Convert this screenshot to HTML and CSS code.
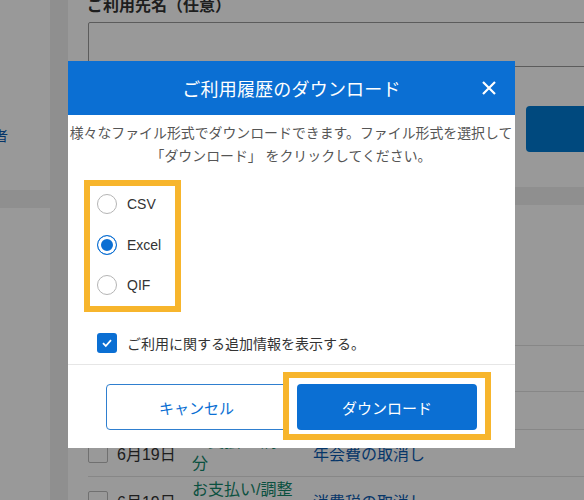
FILE: index.html
```html
<!DOCTYPE html>
<html lang="ja">
<head>
    <meta charset="UTF-8">
    <title>ご利用履歴のダウンロード</title>
    <link rel="stylesheet" href="styles.css">
</head>
<body>
    <div class="page">
        <div class="side">
            <div class="side-panel top">
                <a class="side-link" href="javascript:;">ご利用者</a>
            </div>
            <div class="side-panel"></div>
        </div>

        <div class="main">
            <div class="card form-card">
                <div class="field-label">ご利用先名（任意）</div>
                <div class="field-input"></div>
                <div class="search-btn"></div>
            </div>

            <div class="card list-card">
                <div class="row head"></div>
                <div class="row r1"></div>
                <div class="row r2"></div>
                <div class="row r3">
                    <span class="chk"></span>
                    <span class="date">6月19日</span>
                    <span class="kind">お支払い/調整<br>分</span>
                    <span class="desc">年会費の取消し</span>
                </div>
                <div class="row r4">
                    <span class="chk"></span>
                    <span class="date">6月19日</span>
                    <span class="kind">お支払い/調整<br>分</span>
                    <span class="desc">消費税の取消し</span>
                </div>
            </div>
        </div>
    </div>

    <!-- 半透明の背景 -->
    <div class="overlay"></div>

    <div class="modal">
        <div class="modal-head">
            <span class="modal-title">ご利用履歴のダウンロード</span>
            <a class="modal-close" href="javascript:;">
                <svg width="16" height="16" viewBox="0 0 16 16"><path d="M2 2L14 14M14 2L2 14" stroke="#fff" stroke-width="2.2"/></svg>
            </a>
        </div>
        <div class="modal-body">
            <p class="intro">様々なファイル形式でダウンロードできます。ファイル形式を選択して<br>「ダウンロード」 をクリックしてください。</p>

            <div class="format-box">
                <label class="radio"><span class="dot"></span>CSV</label>
                <label class="radio"><span class="dot on"></span>Excel</label>
                <label class="radio"><span class="dot"></span>QIF</label>
            </div>

            <label class="check">
                <span class="box">
                    <svg width="12" height="12" viewBox="0 0 12 12"><path d="M2 6.2L4.8 9L10 3.2" fill="none" stroke="#fff" stroke-width="1.8"/></svg>
                </span>
                ご利用に関する追加情報を表示する。
            </label>
        </div>
        <div class="modal-foot">
            <a class="btn cancel" href="javascript:;">キャンセル</a>
            <a class="btn download" href="javascript:;">ダウンロード</a>
        </div>
    </div>
</body>
</html>
```

FILE: styles.css
```css
*{
    margin: 0;
    padding: 0;
    box-sizing: border-box;
}

body{
    width: 584px;
    height: 500px;
    overflow: hidden;
    background-color: #efefef;
    font-family: "Liberation Sans", "Noto Sans CJK JP", sans-serif;
    color: #333;
    position: relative;
}

a{
    text-decoration: none;
}

.page{
    display: flex;
    gap: 18px;
    height: 500px;
}

/*左のメニュー、半分は画面外*/
.side{
    width: 200px;
    margin-left: -150px;
    display: flex;
    flex-direction: column;
    gap: 18px;
    flex-shrink: 0;
}

.side-panel{
    background-color: #fff;
    flex: 1;
}

.side-panel.top{
    flex: none;
    height: 190px;
    padding: 125px 42px 0 0;
    text-align: right;
}

.side-link{
    color: #0a5bb0;
    font-size: 14px;
}

.main{
    flex: 1;
    display: flex;
    flex-direction: column;
    gap: 18px;
    min-width: 0;
}

.card{
    background-color: #fff;
}

.form-card{
    height: 187px;
    flex-shrink: 0;
    padding: 0 0 0 20px;
}

.field-label{
    font-size: 16px;
    font-weight: bold;
    line-height: 20px;
    margin: -4px 0 6px -1px;
}

.field-input{
    height: 45px;
    width: 520px;
    border: 1px solid #999;
    border-radius: 2px;
}

.search-btn{
    width: 100px;
    height: 46px;
    margin: 39px 0 0 438px;
    background-color: #007ad2;
    border-radius: 4px;
}

.list-card{
    flex: 1;
    min-height: 0;
    padding-left: 20px;
}

.row{
    display: flex;
    align-items: center;
    border-bottom: 1px solid #e2e2e2;
}

.row.head{ height: 141px; }
.row.r1{ height: 46px; }
.row.r2{ height: 38px; }
.row.r3{ height: 47px; }
.row.r4{ height: 47px; border-bottom: none; }

.chk{
    width: 20px;
    height: 20px;
    border: 1px solid #bbb;
    border-radius: 2px;
    background-color: #fff;
    flex-shrink: 0;
}

.date{
    width: 76px;
    padding-left: 9px;
    font-size: 16px;
    flex-shrink: 0;
}

.kind{
    width: 129px;
    padding-left: 8px;
    font-size: 16px;
    line-height: 22px;
    color: #12876b;
    flex-shrink: 0;
}

.desc{
    font-size: 16px;
    color: #0a5bb0;
}

.overlay{
    position: absolute;
    top: 0;
    left: 0;
    right: 0;
    bottom: 0;
    background-color: rgba(0, 0, 0, 0.4);
}

/*ダイアログ*/
.modal{
    position: absolute;
    left: 68px;
    top: 61px;
    width: 447px;
    height: 387px;
    background-color: #fff;
}

.modal-head{
    height: 54px;
    background-color: #0b6fd3;
    display: flex;
    align-items: center;
    justify-content: center;
    position: relative;
}

.modal-title{
    color: #fff;
    font-size: 18px;
    letter-spacing: 0.2px;
}

.modal-close{
    position: absolute;
    right: 18px;
    top: 19px;
    width: 16px;
    height: 16px;
    display: block;
}

.modal-close svg{
    display: block;
}

.modal-body{
    padding: 7px 0 0 0;
}

.intro{
    font-size: 13.9px;
    line-height: 23px;
    color: #555;
    text-align: center;
    white-space: nowrap;
    margin-left: -1px;
}

.format-box{
    width: 97px;
    height: 132px;
    margin: 12px 0 0 16px;
    border: 6px solid #f7b52c;
    padding: 8px 0 0 7px;
    display: flex;
    flex-direction: column;
    gap: 20.5px;
}

.radio{
    display: flex;
    align-items: center;
    gap: 10px;
    height: 20px;
    font-size: 14px;
    color: #333;
}

.dot{
    width: 20px;
    height: 20px;
    border: 1px solid #b5b5b5;
    border-radius: 50%;
    background-color: #fff;
    flex-shrink: 0;
}

.dot.on{
    border: 1px solid #0b6fd3;
    background-color: #0b6fd3;
    box-shadow: inset 0 0 0 3px #fff;
}

.check{
    display: flex;
    align-items: center;
    gap: 10px;
    margin: 21px 0 0 29px;
    height: 20px;
    font-size: 14px;
    color: #333;
}

.box{
    width: 20px;
    height: 20px;
    border-radius: 3px;
    background-color: #0b6fd3;
    display: flex;
    align-items: center;
    justify-content: center;
}

.modal-foot{
    margin-top: 11px;
    border-top: 1px solid #e6e6e6;
    padding: 19px 0 0 0;
    display: flex;
    justify-content: center;
    gap: 10px;
}

.btn{
    width: 181px;
    height: 46px;
    border-radius: 4px;
    display: flex;
    align-items: center;
    justify-content: center;
    font-size: 15px;
}

.btn.cancel{
    border: 1px solid #2f7fcf;
    color: #0b6fd3;
    background-color: #fff;
}

.btn.download{
    width: 180px;
    background-color: #0b6fd3;
    color: #fff;
    position: relative;
}

/*強調の枠*/
.btn.download::after{
    content: "";
    position: absolute;
    top: -12px;
    bottom: -10px;
    left: -14px;
    right: -14px;
    border: 6px solid #f7b52c;
}
```
